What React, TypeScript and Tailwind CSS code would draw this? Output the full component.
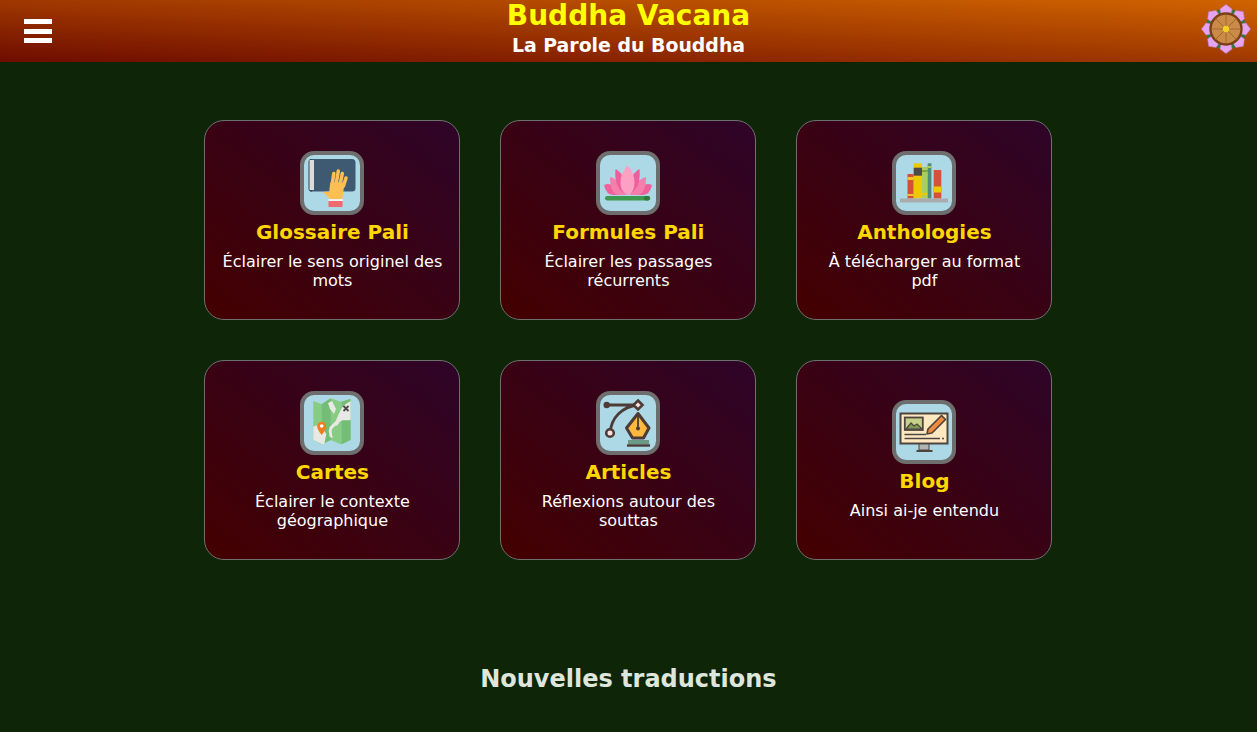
import React from "react";

const Frame = ({ children }: { children: React.ReactNode }) => (
  <div className="w-16 h-16 shrink-0 rounded-[14px] border-4 border-[#6e6e6e] bg-[#add8e6] overflow-hidden">
    <svg viewBox="0 0 56 56" className="block w-14 h-14">{children}</svg>
  </div>
);

const BookIcon = () => (
  <Frame>
    <path d="M6 4h42a3.500 3.500 0 0 1 3.500 3.500V33a3.500 3.500 0 0 1-3.500 3.500H6z" fill="#3e5a72" />
    <path d="M8 4H7.500A3 3 0 0 0 4.500 7v26.500a3 3 0 0 0 3 3H8z" fill="#2f4558" />
    <rect x="5.500" y="5" width="4.500" height="30" fill="#dcdcdc" />
    <path d="M18.700 37l6.500-.5 1-9h14.500l-2.500 16.500H25.500l-.8-1.500z" fill="#fdbe52" />
    <path d="M28 31l1.800-12.500M32 30l2.300-14M36 30l2.300-11.500M39.500 31l2.500-8" stroke="#fdbe52" strokeWidth="3.500" strokeLinecap="round" />
    <rect x="24.500" y="44" width="14.500" height="2" fill="#f2f2f2" />
    <rect x="24.500" y="46" width="14" height="6" fill="#ef6a6e" />
  </Frame>
);

const LotusIcon = () => (
  <Frame>
    <path d="M4 30q10-4 18 10h-8Q6 40 4 30z" fill="#f0609a" />
    <path d="M52 30q-10-4-18 10h8q8 0 10-10z" fill="#f0609a" />
    <path d="M10 22q10 2 16 18H18Q10 38 10 22z" fill="#f47eac" />
    <path d="M46 22q-10 2-16 18h8q8-2 8-18z" fill="#f47eac" />
    <path d="M15.500 14q10 5 12 26-14-6-12-26z" fill="#ee5e9c" />
    <path d="M39.500 14q-10 5-12 26 14-6 12-26z" fill="#ee5e9c" />
    <path d="M27.500 10.500q7 7 7 17t-7 12.500q-7-3-7-12.500t7-17z" fill="#fda1c4" />
    <rect x="5" y="41" width="45" height="4.500" rx="2.250" fill="#3f9a4f" />
    <rect x="44" y="41" width="6" height="4.500" rx="2.250" fill="#2f7a40" />
  </Frame>
);

const BooksIcon = () => (
  <Frame>
    <rect x="11.500" y="19" width="6.200" height="24.500" fill="#d2503a" />
    <rect x="11.500" y="22" width="6.200" height="3" fill="#f0c430" />
    <rect x="11.500" y="39" width="6.200" height="2" fill="#f0c430" />
    <rect x="17.700" y="8.300" width="8.300" height="35.200" fill="#eec800" />
    <rect x="17.700" y="12.700" width="8.300" height="8" fill="#4c4a4a" />
    <rect x="26" y="12" width="5.700" height="31.500" fill="#a9cd5e" />
    <rect x="26" y="15" width="5.700" height="2" fill="#7ea53f" />
    <rect x="26" y="38" width="5.700" height="2" fill="#eec800" />
    <rect x="31.700" y="8.300" width="3.700" height="35.200" fill="#4f8a7a" />
    <rect x="31.700" y="11" width="3.700" height="2" fill="#a9cd5e" />
    <rect x="37.700" y="15" width="7.600" height="28.500" fill="#d2523a" />
    <rect x="37.700" y="31.500" width="7.600" height="6" fill="#eec800" />
    <rect x="4" y="43.500" width="48" height="4" fill="#a9abad" />
  </Frame>
);

const MapIcon = () => (
  <Frame>
    <path d="M9.300 6l8.400 3.300 9-6 10 3.400 9-2.700v41l-9 4.300-10-4.300-9.400 4.300-8-4.300z" fill="#86cc84" />
    <path d="M17.700 9.300l9-6v41.700l-8.400 4.300zM37.700 6.700l9-2.700v41l-9 4.300z" fill="#74bd76" />
    <path d="M46.700 25c-4 1-8-1-11 2l-2 3c-2 1-6 2-6 7l1 6-3-1-1-6 1-4 6-6 3-7 3-6 4-4 5-3zM9.300 32c4-3 8-1 10 2l3 5-2 10-2 .300-9-4.300zM28 6l4 8-2 5-4-5-2-6z" fill="#e8e8e4" />
    <path d="M39.500 11l5 5M44.500 11l-5 5" stroke="#4a4a4a" strokeWidth="1.800" />
    <path d="M17.700 40c-2.800-4-4.500-6-4.500-8.800a4.500 4.500 0 0 1 9 0c0 2.800-1.700 4.800-4.500 8.800z" fill="#f47b20" />
    <circle cx="17.700" cy="31" r="1.800" fill="#fff" />
  </Frame>
);

const PenIcon = () => (
  <Frame>
    <path d="M7 10H38M38 10C22 12 11.500 22 10 38" fill="none" stroke="#4c3b36" strokeWidth="2.800" />
    <circle cx="6.700" cy="10" r="3.200" fill="#4c3b36" />
    <path d="M38 5.500l4.500 4.500-4.500 4.500-4.500-4.500z" fill="#fbdede" stroke="#4c3b36" strokeWidth="2.600" />
    <circle cx="10" cy="38" r="3.800" fill="#fbdede" stroke="#4c3b36" strokeWidth="2.600" />
    <path d="M38 18.500L49 33l-5.500 10H32.500L26.500 33z" fill="#fdb940" stroke="#4c3b36" strokeWidth="3" strokeLinejoin="round" />
    <path d="M38 20v13" stroke="#4c3b36" strokeWidth="1.800" />
    <circle cx="38" cy="33.500" r="2" fill="#4c3b36" />
    <rect x="28" y="45" width="21" height="4.300" fill="#6a9a85" />
    <rect x="27" y="49.300" width="23" height="2.400" fill="#4c3b36" />
  </Frame>
);

const BlogIcon = () => (
  <Frame>
    <rect x="4.500" y="9.500" width="47" height="30" fill="#ffe8bf" stroke="#4d4540" strokeWidth="2" />
    <rect x="8.800" y="13.500" width="18" height="12.500" fill="#c6d08a" stroke="#4d4540" strokeWidth="1.800" />
    <path d="M10 25l5-6 3 3 3-2 5 5z" fill="#7f9a52" stroke="#4d4540" strokeWidth="1.200" />
    <path d="M31 30l1-5 13.500-13.500 4 4L36 29z" fill="#f08a3c" stroke="#4d4540" strokeWidth="1.700" strokeLinejoin="round" />
    <path d="M8.500 30.500H30M8.500 34.500H44" stroke="#4d4540" strokeWidth="1.500" />
    <circle cx="47" cy="34.500" r="1" fill="#4d4540" />
    <rect x="23" y="40" width="10" height="6" fill="#b3b3b3" stroke="#4d4540" strokeWidth="1" />
    <rect x="20.500" y="46" width="16" height="2" fill="#4d4540" />
  </Frame>
);

const Wheel = () => {
  const angles = [0, 45, 90, 135, 180, 225, 270, 315];
  return (
    <svg viewBox="-25 -25 50 50" className="w-[50px] h-[50px] mb-1">
      {angles.map((a) => (
        <path key={`g${a}`} d="M-6-17 L0-21 6-17 0-10z" fill="#2f7a3c" transform={`rotate(${a + 22.500})`} />
      ))}
      {angles.map((a) => (
        <path key={`p${a}`} d="M0-24.500L6-20 5-15 0-13-5-15-6-20z" fill="#e5a4ee" stroke="#c678d8" strokeWidth="0.500" transform={`rotate(${a})`} />
      ))}
      <circle r="15.500" fill="#c98b47" stroke="#7a3f12" strokeWidth="2.400" />
      {angles.map((a) => (
        <line key={`s${a}`} x1="0" y1="0" x2="0" y2="-15" stroke="#9a6228" strokeWidth="0.800" transform={`rotate(${a})`} />
      ))}
      <circle r="3.200" fill="#f5d020" />
    </svg>
  );
};

const cards = [
  { icon: <BookIcon />, title: "Glossaire Pali", desc: "Éclairer le sens originel des mots" },
  { icon: <LotusIcon />, title: "Formules Pali", desc: "Éclairer les passages récurrents" },
  { icon: <BooksIcon />, title: "Anthologies", desc: "À télécharger au format pdf" },
  { icon: <MapIcon />, title: "Cartes", desc: "Éclairer le contexte géographique" },
  { icon: <PenIcon />, title: "Articles", desc: "Réflexions autour des souttas" },
  { icon: <BlogIcon />, title: "Blog", desc: "Ainsi ai-je entendu" },
];

export default function App() {
  return (
    <div className="h-[732px] overflow-hidden bg-[#0e2507] font-['DejaVu_Sans',sans-serif]">
      <header className="h-[62px] flex items-center justify-between bg-linear-to-tr/srgb from-[#6e0c00] to-[#d06400] pl-6 pr-[6px]">
        <div className="w-8">
          <div className="w-7 flex flex-col gap-[4.500px]">
            <span className="block h-[5px] bg-white" />
            <span className="block h-[5px] bg-white" />
            <span className="block h-[5px] bg-white" />
          </div>
        </div>
        <div className="flex flex-col items-center pb-1">
          <h1 className="text-[28px] leading-[32px] font-bold text-[#ffff00]">Buddha Vacana</h1>
          <p className="text-[18.900px] leading-[26px] font-bold text-white">La Parole du Bouddha</p>
        </div>
        <Wheel />
      </header>
      <main className="pt-[58px] pr-[0.200px] flex flex-col items-center">
        <div className="grid grid-cols-[256px_256px_256px] gap-10">
          {cards.map((c) => (
            <div
              key={c.title}
              className="h-[200px] rounded-[20px] border border-[#6f6f6f] bg-linear-to-tr/srgb from-[#440000] to-[#2e0428] flex flex-col items-center justify-center px-4 text-center"
            >
              {c.icon}
              <h2 className="mt-[5px] text-[20px] leading-[24px] font-bold text-[#ffd700]">{c.title}</h2>
              <p className="mt-[8px] text-[16px] leading-[19px] text-white">{c.desc}</p>
            </div>
          ))}
        </div>
        <h2 className="mt-[105px] text-[24px] leading-[28px] font-bold text-[#dfe6dc]">Nouvelles traductions</h2>
      </main>
    </div>
  );
}
